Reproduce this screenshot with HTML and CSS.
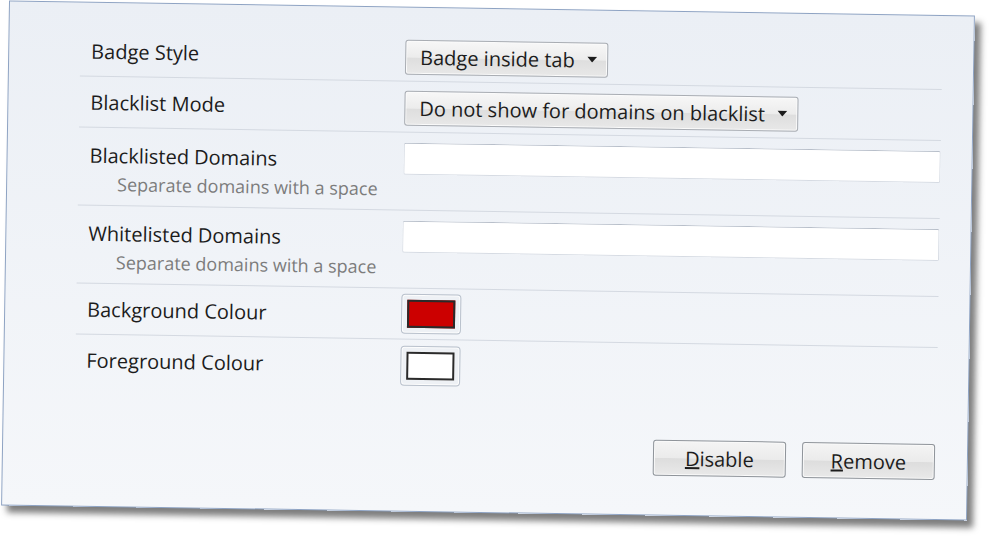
FILE: index.html
```html
<!DOCTYPE html>
<html lang="en">
<head>
    <meta charset="UTF-8">
    <meta name="viewport" content="width=device-width, initial-scale=1.0">
    <title>Badge options</title>
    <link rel="stylesheet" href="styles.css">
</head>
<body>
    <div class="dialog">
        <div class="settings">
            <div class="row">
                <div class="label">Badge Style</div>
                <div class="control">
                    <button class="dropdown">Badge inside tab
                        <svg class="arrow" width="10" height="6" viewBox="0 0 10 6"><path d="M0 0h10L5 6z"/></svg>
                    </button>
                </div>
            </div>
            <div class="row">
                <div class="label">Blacklist Mode</div>
                <div class="control">
                    <button class="dropdown">Do not show for domains on blacklist
                        <svg class="arrow" width="10" height="6" viewBox="0 0 10 6"><path d="M0 0h10L5 6z"/></svg>
                    </button>
                </div>
            </div>
            <div class="row tall">
                <div class="label">Blacklisted Domains
                    <div class="hint">Separate domains with a space</div>
                </div>
                <div class="control"><input class="textbox" type="text"></div>
            </div>
            <div class="row tall">
                <div class="label">Whitelisted Domains
                    <div class="hint">Separate domains with a space</div>
                </div>
                <div class="control"><input class="textbox" type="text"></div>
            </div>
            <div class="row">
                <div class="label">Background Colour</div>
                <div class="control"><button class="swatch"><span class="chip red"></span></button></div>
            </div>
            <div class="row last">
                <div class="label">Foreground Colour</div>
                <div class="control"><button class="swatch"><span class="chip white"></span></button></div>
            </div>
        </div>
        <div class="actions">
            <button class="btn"><u>D</u>isable</button>
            <button class="btn"><u>R</u>emove</button>
        </div>
    </div>
</body>
</html>
```
FILE: styles.css
```css
*{
    box-sizing: border-box;
    font-family: "Open Sans", "Noto Sans", sans-serif;
}
body{
    margin: 0;
    background-color: #ffffff;
    overflow: hidden;
    height: 546px;
}
.dialog{
    width: 966px;
    height: 505px;
    margin: 8px 0 0 5px;
    transform: rotate(0.9deg);
    background: linear-gradient(#ebeff5, #f5f7fa);
    border: 1px solid #8ea3c3;
    box-shadow: 6px 7px 6px rgba(40, 40, 40, 0.6);
    display: flex;
    flex-direction: column;
}
.settings{
    margin: 23px 22px 0 71px;
    padding-right: 9px;
}
.row{
    display: grid;
    grid-template-columns: 325px 1fr;
    align-items: center;
    height: 51px;
    border-bottom: 1px solid #d4d9e1;
}
.row.tall{
    height: 78px;
    align-items: start;
}
.row.last{
    border-bottom: none;
}
.label{
    padding-left: 11px;
    font-size: 20px;
    color: #1c1c1c;
}
.row.tall .label{
    padding-top: 13px;
    line-height: 30px;
}
.hint{
    padding-left: 28px;
    font-size: 18px;
    color: #7c7c7c;
    line-height: 26px;
}
.row.tall .control{
    padding-top: 10px;
}
.dropdown{
    display: inline-flex;
    align-items: center;
    gap: 12px;
    height: 35px;
    padding: 0 10px 0 14px;
    font-size: 20px;
    color: #1c1c1c;
    background: linear-gradient(#f7f7f7 0%, #ececec 50%, #dedede 52%, #e8e8e8 100%);
    border: 1px solid #a9adb3;
    border-radius: 3px;
    box-shadow: inset 0 0 0 1px #fbfbfb;
    margin-top: 2px;
}
.arrow{
    fill: #1c1c1c;
}
.textbox{
    width: 100%;
    height: 32px;
    background-color: #ffffff;
    border: 1px solid #d6dbe3;
    border-top-color: #b8bfca;
    border-radius: 2px;
}
.swatch{
    width: 60px;
    height: 40px;
    padding: 5px;
    background-color: #eef1f5;
    border: 1px solid #b9c1cc;
    border-radius: 4px;
    box-shadow: inset 0 0 0 1px #fdfdfd;
    display: flex;
}
.chip{
    flex: 1;
    border: 2px solid #2a2a2a;
}
.chip.red{
    background-color: #cc0000;
}
.chip.white{
    background-color: #ffffff;
}
.actions{
    margin-top: auto;
    margin-bottom: 39px;
    padding-right: 32px;
    display: flex;
    justify-content: flex-end;
    gap: 16px;
}
.btn{
    width: 133px;
    height: 36px;
    font-size: 20px;
    color: #1c1c1c;
    background: linear-gradient(#f4f4f4 0%, #ebebeb 50%, #dddddd 52%, #e9e9e9 100%);
    border: 1px solid #8f949a;
    border-radius: 3px;
    box-shadow: inset 0 0 0 1px #fafafa;
}
```
